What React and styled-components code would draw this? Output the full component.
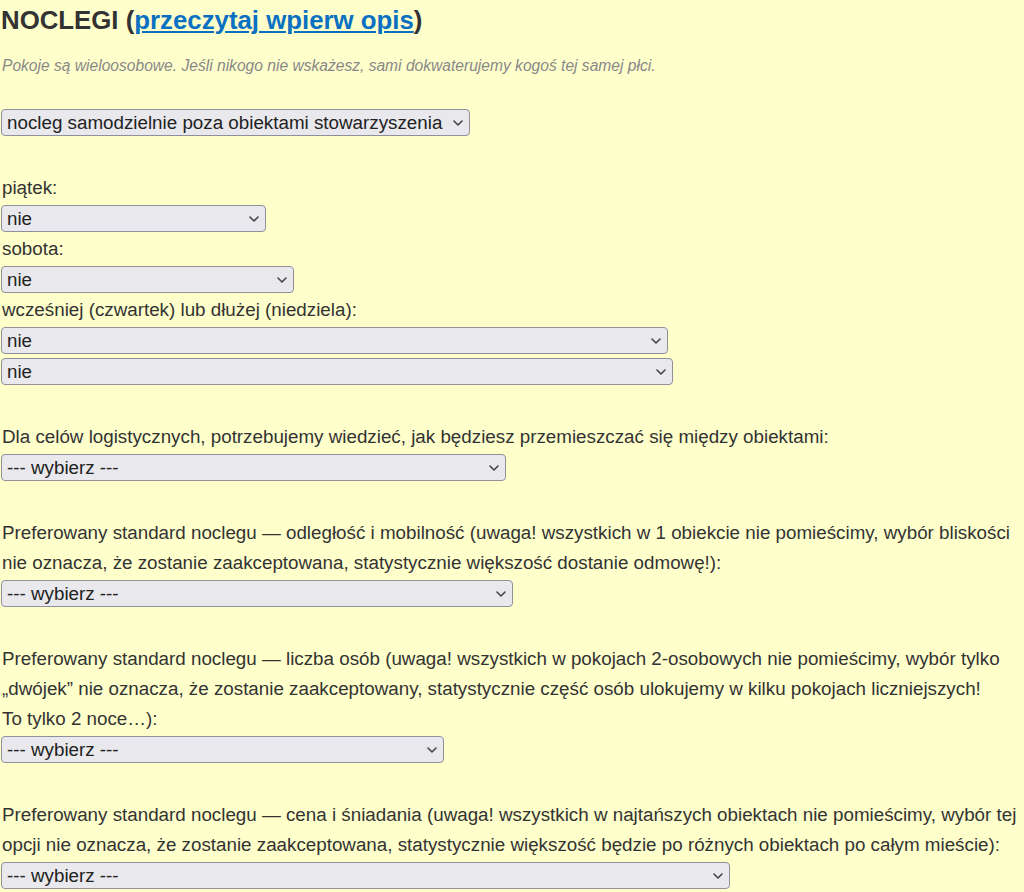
import React from 'react';
import styled, { createGlobalStyle } from 'styled-components';

const GlobalStyle = createGlobalStyle`
  html, body {
    margin: 0;
    padding: 0;
    background: #ffffcc;
  }
  body {
    font-family: "Liberation Sans", Arial, sans-serif;
    color: #333;
  }
`;

const fields = [
  {
    id: 'transport',
    label: 'Dla celów logistycznych, potrzebujemy wiedzieć, jak będziesz przemieszczać się między obiektami:',
    width: 505,
  },
  {
    id: 'distance',
    label:
      'Preferowany standard noclegu — odległość i mobilność (uwaga! wszystkich w 1 obiekcie nie pomieścimy, wybór bliskości nie oznacza, że zostanie zaakceptowana, statystycznie większość dostanie odmowę!):',
    width: 512,
  },
  {
    id: 'people',
    label: (
      <>
        Preferowany standard noclegu — liczba osób (uwaga! wszystkich w pokojach 2-osobowych nie pomieścimy, wybór tylko
        „dwójek” nie oznacza, że zostanie zaakceptowany, statystycznie część osób ulokujemy w kilku pokojach liczniejszych!
        <br />
        To tylko 2 noce…):
      </>
    ),
    width: 443,
  },
  {
    id: 'price',
    label:
      'Preferowany standard noclegu — cena i śniadania (uwaga! wszystkich w najtańszych obiektach nie pomieścimy, wybór tej opcji nie oznacza, że zostanie zaakceptowana, statystycznie większość będzie po różnych obiektach po całym mieście):',
    width: 729,
  },
];

const Chevron = () => (
  <Arrow width="10" height="6" viewBox="0 0 10 6">
    <path d="M1 1 L5 5 L9 1" fill="none" stroke="#444" strokeWidth="1.6" strokeLinecap="round" strokeLinejoin="round" />
  </Arrow>
);

const Select = ({ width, children }) => (
  <SelectWrap $width={width}>
    <NativeSelect defaultValue={children}>
      <option>{children}</option>
    </NativeSelect>
    <Chevron />
  </SelectWrap>
);

const App = () => {
  return (
    <Page>
      <GlobalStyle />
      <Title>
        NOCLEGI (<TitleLink href="#opis">przeczytaj wpierw opis</TitleLink>)
      </Title>
      <Note>Pokoje są wieloosobowe. Jeśli nikogo nie wskażesz, sami dokwaterujemy kogoś tej samej płci.</Note>

      <Section $first>
        <Select width={469}>nocleg samodzielnie poza obiektami stowarzyszenia</Select>
      </Section>

      <Section>
        <Field>
          <Label>piątek:</Label>
          <Select width={265}>nie</Select>
        </Field>
        <Field>
          <Label>sobota:</Label>
          <Select width={293}>nie</Select>
        </Field>
        <Field>
          <Label>wcześniej (czwartek) lub dłużej (niedziela):</Label>
          <Stack>
            <Select width={667}>nie</Select>
            <Select width={672}>nie</Select>
          </Stack>
        </Field>
      </Section>

      {fields.map((f) => (
        <Section key={f.id}>
          <Field>
            <Label>{f.label}</Label>
            <Select width={f.width}>--- wybierz ---</Select>
          </Field>
        </Section>
      ))}
    </Page>
  );
};

const Page = styled.div`
  padding: 4px 2px 0 1px;
  display: flex;
  flex-direction: column;
`;

const Title = styled.h2`
  margin: 0;
  font-size: 25.8px;
  line-height: 32px;
  font-weight: bold;
  color: #333;
`;

const TitleLink = styled.a`
  color: #0a70c2;
  text-decoration: underline;
  text-decoration-thickness: 2px;
  text-underline-offset: 2px;
`;

const Note = styled.p`
  margin: 19px 0 0 1px;
  font-size: 15.6px;
  line-height: 22px;
  font-style: italic;
  color: #888;
`;

const Section = styled.div`
  margin-top: ${(p) => (p.$first ? '32px' : '37px')};
  display: flex;
  flex-direction: column;
  gap: 2px;
`;

const Field = styled.div`
  display: flex;
  flex-direction: column;
  gap: 2px;
`;

const Label = styled.div`
  font-size: 18.8px;
  line-height: 30px;
  padding-left: 1px;
  color: #333;
`;

const Stack = styled.div`
  display: flex;
  flex-direction: column;
  gap: 4px;
`;

const SelectWrap = styled.div`
  position: relative;
  width: ${(p) => p.$width}px;
  height: 27px;
`;

const NativeSelect = styled.select`
  appearance: none;
  width: 100%;
  height: 100%;
  box-sizing: border-box;
  margin: 0;
  padding: 0 24px 0 5px;
  font-family: "Liberation Sans", Arial, sans-serif;
  font-size: 18.8px;
  color: #222;
  background: #e9e9ed;
  border: 1px solid #8f8f9d;
  border-radius: 4px;
`;

const Arrow = styled.svg`
  position: absolute;
  right: 7px;
  top: 11px;
  pointer-events: none;
`;

export default App;
